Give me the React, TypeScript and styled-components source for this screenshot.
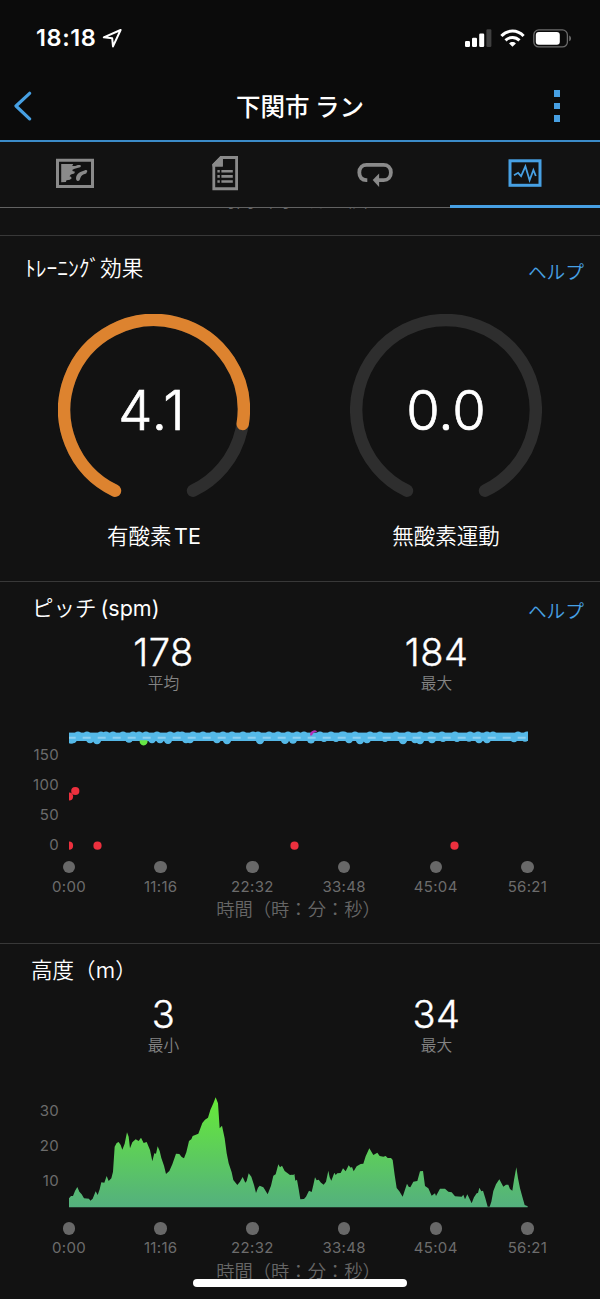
import React from 'react';
import styled, { createGlobalStyle } from 'styled-components';

const BLUE = '#47a0e3';
const GREY = '#8a8a8a';
const LATIN = `Inter, 'Noto Sans CJK JP', sans-serif`;
const JAPANESE = `'Noto Sans CJK JP', sans-serif`;

const GlobalStyle = createGlobalStyle`
  *, *::before, *::after { box-sizing: border-box; }
  body { margin: 0; background: #121212; }
  svg { display: block; }
`;

const Screen = styled.div`
  position: relative;
  display: flex;
  flex-direction: column;
  width: 600px;
  height: 1299px;
  overflow: hidden;
  background: #121212;
  color: #fff;
  font-family: ${LATIN};
`;

const StatusBar = styled.div`
  display: flex;
  justify-content: space-between;
  align-items: center;
  height: 76px;
  padding: 0 28px 0 36px;
  background: #0b0b0b;
`;

const StatusGroup = styled.div<{ $gap: number }>`
  display: flex;
  align-items: center;
  gap: ${(p) => p.$gap}px;
`;

const Clock = styled.span`
  font-size: 23.5px;
  font-weight: 600;
  line-height: 28px;
  letter-spacing: 0.6px;
`;

const Header = styled.header`
  display: flex;
  justify-content: space-between;
  align-items: center;
  height: 66px;
  padding: 0 40px 4px 13px;
  background: #0b0b0b;
  border-bottom: 2px solid #3b8bc8;
`;

const Title = styled.h1`
  margin: 0 0 1px 13px;
  font: 500 24.5px/36px ${JAPANESE};
`;

const MenuDots = styled.div`
  display: flex;
  flex-direction: column;
  gap: 6px;
`;

const MenuDot = styled.span`
  width: 6px;
  height: 6.5px;
  background: ${BLUE};
`;

const TabBar = styled.nav`
  display: flex;
  height: 66px;
`;

const Tab = styled.div<{ $active?: boolean }>`
  flex: 1;
  display: flex;
  justify-content: center;
  height: 66px;
  color: ${(p) => (p.$active ? BLUE : GREY)};
  border-bottom: ${(p) => (p.$active ? `3px solid ${BLUE}` : '1px solid #626262')};
`;

const ScrolledRow = styled.div`
  display: flex;
  align-items: flex-end;
  justify-content: center;
  height: 27px;
  padding-bottom: 22.5px;
  overflow: hidden;
`;

const Section = styled.section<{ $height: number }>`
  display: flex;
  flex-direction: column;
  flex: none;
  height: ${(p) => p.$height}px;
  border-top: 1px solid #383838;
`;

const SectionHead = styled.div<{ $left: number }>`
  display: flex;
  justify-content: space-between;
  height: 52px;
  padding: 0 16px 0 ${(p) => p.$left}px;
`;

const SectionTitle = styled.h2<{ $top: number }>`
  margin: ${(p) => p.$top}px 0 0;
  font: 350 21.5px/32px ${JAPANESE};
  white-space: pre;
`;

const Latin = styled.span<{ $gap?: number }>`
  margin-left: ${(p) => p.$gap ?? 0}px;
  font-family: ${LATIN};
  font-weight: 370;
`;

const HelpLink = styled.a<{ $top: number }>`
  margin-top: ${(p) => p.$top}px;
  font: 350 18.7px/28px ${JAPANESE};
  color: ${BLUE};
`;

const Gauges = styled.div`
  display: flex;
  justify-content: space-between;
  padding: 26px 58px 0;
`;

const GaugeColumn = styled.div`
  display: flex;
  flex-direction: column;
  align-items: center;
  width: 192px;
`;

const Dial = styled.div`
  display: grid;
  width: 192px;
  height: 192px;
  > * { grid-area: 1 / 1; }
`;

const DialValue = styled.span<{ $shift: number; $spacing: number }>`
  align-self: center;
  text-align: center;
  padding: 0 ${(p) => p.$shift}px 1px 0;
  font-size: 54.3px;
  font-weight: 300;
  -webkit-text-stroke: 0.7px currentColor;
  letter-spacing: ${(p) => p.$spacing}px;
  line-height: 64px;
`;

const DialLabel = styled.span`
  margin-top: 13px;
  font: 350 21.5px/32px ${JAPANESE};
  white-space: nowrap;
`;

const Stats = styled.div`
  display: flex;
  justify-content: space-between;
  height: 60px;
  padding: 0 63.5px;
`;

const Stat = styled.div`
  display: flex;
  flex-direction: column;
  align-items: center;
  width: 200px;
`;

const StatValue = styled.span`
  font-size: 38px;
  font-weight: 300;
  -webkit-text-stroke: 0.4px currentColor;
  line-height: 36px;
  letter-spacing: 0.5px;
`;

const StatLabel = styled.span`
  margin-top: 1px;
  font: 350 15.7px/24px ${JAPANESE};
  color: #848484;
`;

const Plot = styled.div<{ $top: number }>`
  display: flex;
  align-items: flex-start;
  margin-top: ${(p) => p.$top}px;
`;

const Scale = styled.div<{ $top: number; $step: number }>`
  display: flex;
  flex-direction: column;
  width: 69px;
  padding: ${(p) => p.$top}px 10px 0 0;
  text-align: right;
  > span {
    height: ${(p) => p.$step}px;
    font-size: 15px;
    line-height: 18px;
    letter-spacing: 0.3px;
    color: #6c6c6c;
  }
  > span:last-child { height: 18px; }
`;

const Ticks = styled.div<{ $top: number }>`
  display: flex;
  justify-content: space-between;
  margin-top: ${(p) => p.$top}px;
  padding: 0 32.5px 0 29px;
`;

const Tick = styled.div`
  display: flex;
  flex-direction: column;
  align-items: center;
  width: 80px;
  gap: 4.5px;
  font-size: 15px;
  line-height: 18px;
  letter-spacing: 0.3px;
  color: #6c6c6c;
  &::before {
    content: '';
    width: 12.5px;
    height: 12.5px;
    border-radius: 50%;
    background: #686868;
  }
`;

const AxisTitle = styled.div`
  width: 597px;
  margin-top: -1.5px;
  font: 350 18.3px/28px ${JAPANESE};
  text-align: center;
  white-space: nowrap;
  color: #666;
`;

const HomeIndicator = styled.div`
  position: absolute;
  left: 193px;
  bottom: 12px;
  width: 214px;
  height: 8px;
  border-radius: 4px;
  background: #fff;
`;

const times = ['0:00', '11:16', '22:32', '33:48', '45:04', '56:21'];
const axisLabel = '時間（時：分：秒）';

function TimeAxis({ top }: { top: number }) {
  return (
    <>
      <Ticks $top={top}>
        {times.map((t) => (
          <Tick key={t}>{t}</Tick>
        ))}
      </Ticks>
      <AxisTitle>{axisLabel}</AxisTitle>
    </>
  );
}

interface GaugeProps {
  value: string;
  shift?: number;
  spacing?: number;
  arc?: string;
  children: React.ReactNode;
}

function Gauge({ value, shift = 0, spacing = 0, arc, children }: GaugeProps) {
  return (
    <GaugeColumn>
      <Dial>
        <svg width="192" height="192" fill="none" strokeWidth="12.4" strokeLinecap="round">
          <path d="M57 176.7A89.8 89.8 0 1 1 135 176.7" stroke="#2e2e2e" />
          {arc && <path d={arc} stroke="#dd832f" />}
        </svg>
        <DialValue $shift={shift} $spacing={spacing}>{value}</DialValue>
      </Dial>
      <DialLabel>{children}</DialLabel>
    </GaugeColumn>
  );
}

/* Cadence samples: horizontal position and vertical centre inside the 459x130 plot. */
const low: [number, number][] = [
  [2, 14.5], [4, 14], [21, 14], [28, 15], [60, 13.5], [75, 13.2], [83, 14], [91, 14], [99, 14.7], [117, 14], [121, 14],
  [148, 14], [158, 15], [191, 15], [216, 14.7], [224, 14.5], [242, 14.2], [255, 12.7], [267, 12.7], [280, 14], [291, 15],
  [298, 14], [316, 12.7], [334, 15], [346, 14], [351, 15], [363, 14], [374, 12.7], [388, 12.7], [400, 12.5], [410, 14],
  [418, 14], [445, 13], [456, 12.5],
];
const high: number[] = [
  9, 18, 32, 37, 44, 54, 64, 70, 77, 88, 101, 109, 113, 124, 134, 144, 154, 163, 174, 184, 189, 200, 209, 219, 228, 235,
  251, 262, 273, 275, 286, 301, 311, 327, 339, 351, 362, 373, 386, 401, 409, 418, 424, 449, 458,
];
const paused: [number, number][] = [[0, 71.5], [6.3, 66], [0, 120.7], [28.5, 120.7], [225.5, 120.7], [385.5, 120.7]];

function CadencePlot() {
  return (
    <svg width="459" height="130" viewBox="0 0 459 130">
      <g fill="#55b9e8">
        <rect y="7.6" width="459" height="8.4" />
        {low.map(([x, y]) => (
          <circle key={`l${x}`} cx={x} cy={y} r="4.2" />
        ))}
        {high.map((x) => (
          <circle key={`h${x}`} cx={x} cy="10.6" r="4.2" />
        ))}
      </g>
      <path d="M241.2 10.5A4.2 4.2 0 0 1 248.4 6.8Q244 7 243 10.5Z" fill="#b32fb5" />
      <path d="M70.8 15.2H78.4A4 4 0 1 1 70.8 15.2Z" fill="#67e645" />
      <path d="M0 12.7H459" stroke="#8ed0f0" strokeWidth="1.9" strokeDasharray="8 7" strokeDashoffset="1.3" />
      {paused.map(([x, y]) => (
        <circle key={`${x}-${y}`} cx={x} cy={y} r="4.1" fill="#ed303e" />
      ))}
    </svg>
  );
}

const elevation =
  '0,310 6,303 12,303 18,288 25,276 31,290 38,298 45,310 60,311 64,317 71,311 80,289 86,300 92,283 97,262 106,263 113,243 119,258 127,250 132,230 137,155 143,144 149,141 155,150 160,164 167,146 174,112 179,125 183,160 190,142 200,133 209,138 216,128 224,144 233,141 243,165 250,199 256,175 261,176 266,154 272,168 277,189 285,212 291,237 301,228 310,208 321,176 331,177 338,186 345,190 352,172 360,138 367,133 371,123 388,116 400,84 408,74 417,68 424,45 433,25 440,7 447,25 452,100 459,92 467,130 473,175 479,205 488,232 493,255 505,270 513,260 521,246 529,263 533,258 539,235 547,245 555,270 561,294 567,278 572,272 583,277 596,298 606,272 613,242 620,238 628,208 633,217 639,212 647,228 655,234 663,240 669,239 673,240 676,236 679,257 684,254 689,282 694,313 705,312 711,305 720,287 728,291 733,270 738,247 743,256 749,254 756,263 764,269 771,260 778,227 782,247 787,257 796,233 800,240 805,235 815,234 822,220 830,229 839,211 845,218 849,216 854,229 863,214 875,207 883,206 890,184 901,160 913,180 925,173 932,183 943,185 950,183 956,189 966,189 971,195 977,240 983,279 991,289 1001,305 1007,287 1014,266 1019,275 1024,277 1033,260 1045,258 1053,229 1062,228 1068,273 1078,280 1088,302 1098,295 1101,303 1113,281 1128,281 1138,290 1148,292 1158,304 1178,305 1183,299 1188,313 1195,298 1208,325 1215,307 1223,295 1227,294 1231,278 1237,289 1242,287 1249,310 1256,335 1262,335 1267,320 1273,288 1281,268 1291,253 1303,275 1311,269 1318,269 1323,282 1330,287 1335,255 1342,217 1347,250 1353,280 1360,305 1367,330 1376,334';

function ElevationPlot() {
  return (
    <svg width="459" height="113" viewBox="0 0 1377 339">
      <defs>
        <linearGradient id="elevation" gradientUnits="userSpaceOnUse" x1="0" y1="7" x2="0" y2="336">
          <stop offset="0" stopColor="#66ea38" />
          <stop offset="1" stopColor="#54b07e" />
        </linearGradient>
      </defs>
      <polygon points={`0,337 ${elevation} 1376,337`} fill="url(#elevation)" />
    </svg>
  );
}

function MapIcon() {
  return (
    <svg width="38" height="64" viewBox="0 0 38 64" fill="currentColor">
      <path fillRule="evenodd" d="M0 16.7h38v29.3H0zM3 19.7v23.3h32v-23.3z" />
      <path d="M5.2 22h12l-1 1.9h3l2.7-.8h2.2c1.1.3 1.1 1.8 0 2.2l-5.4 1.5-2.2 1v1.2l2.5.8-.8 1.6-3.3 1.2-1.4 1.6 1.4.5.8 1.5-1.8 1.6-3.4.5-.6 1.7-4.7.2z" />
      <path d="M20.2 37.5c-.8-3.5 1.8-6.7 4.8-7.8l4-1.4c1.8-.6 2.6.4 2.2 1.2l-1 1.9-2.9 1.1c-1.6.8-2.8 2.5-3.4 4.8-.5 2.3-3.1 2.1-3.7.2z" />
    </svg>
  );
}

function ReportIcon() {
  return (
    <svg width="26" height="64" viewBox="0 0 26 64" fill="currentColor">
      <path fillRule="evenodd" d="M8.5 14H26v34.3H.4V22.2zM10.8 17v7.6H3.2v20.7h20V17z" />
      <path d="M8.5 14 .4 22.2v2.4h10.4V14z" />
      <path d="M5.4 28h2.4v2.6H5.4zM9.4 28h11.4v2.6H9.4zM5.4 33.1h2.4v2.6H5.4zM9.4 33.1h11.4v2.6H9.4zM5.4 38.2h2.4v2.6H5.4zM9.4 38.2h11.4v2.6H9.4z" />
    </svg>
  );
}

function LapsIcon() {
  return (
    <svg width="36" height="64" viewBox="0 0 36 64" fill="none">
      <path d="M10.3 38.1H9.4C5 38.1 2.3 35.3 2.3 30.4S5.5 22.9 9.6 22.9H26.5c4.2 0 7.4 2.7 7.4 7.5s-2.9 7.7-7.2 7.7h-6.2" stroke="currentColor" strokeWidth="3.8" />
      <path d="M15.7 38.1 22.1 31.5v13.4z" fill="currentColor" />
    </svg>
  );
}

function ChartsIcon() {
  return (
    <svg width="34" height="64" viewBox="0 0 34 64" fill="none" stroke="currentColor">
      <rect x="2" y="18.8" width="30" height="24.5" strokeWidth="3" />
      <path d="M6 33.3 10.1 30.8 13.1 34.2 17.4 24.3 21.6 38.2 25.4 28 27.8 34" strokeWidth="1.8" />
    </svg>
  );
}

export default function App() {
  return (
    <Screen>
      <GlobalStyle />
      <StatusBar>
        <StatusGroup $gap={6}>
          <Clock>18:18</Clock>
          <svg width="20" height="20" viewBox="0 0 20 20" fill="none" stroke="#fff" strokeWidth="2" strokeLinejoin="round">
            <path d="M18.6 2 1.8 9.3 10.2 10.3 11 18.4z" />
          </svg>
        </StatusGroup>
        <StatusGroup $gap={8}>
          <svg width="27" height="18" viewBox="0 0 27 18" fill="#fff">
            <rect x="0" y="12" width="5" height="6" rx="1.2" />
            <rect x="7" y="8.7" width="5" height="9.3" rx="1.2" />
            <rect x="14.2" y="4.5" width="5" height="13.5" rx="1.2" />
            <rect x="21.4" y="0.3" width="5" height="17.7" rx="1.2" fill="#404040" />
          </svg>
          <svg width="25" height="18" viewBox="0 0 25 18" fill="none" stroke="#fff" strokeWidth="3">
            <path d="M1.4 7C7.5 .3 17.5 .3 23.6 7" />
            <path d="M5.5 11.4C9.5 7.4 15.5 7.4 19.5 11.4" />
            <path d="M12.5 17.8 9.1 14.4C11 12.6 14 12.6 15.9 14.4z" fill="#fff" stroke="none" />
          </svg>
          <svg width="39" height="19" viewBox="0 0 39 19">
            <rect x="0.8" y="0.9" width="33.6" height="17" rx="5" fill="none" stroke="#6c6c6c" strokeWidth="1.3" />
            <rect x="2.8" y="3" width="24" height="12.8" rx="3" fill="#fff" />
            <path d="M36.2 6.5c2.4.8 2.4 5 0 5.8z" fill="#6c6c6c" />
          </svg>
        </StatusGroup>
      </StatusBar>
      <Header>
        <svg width="20" height="30" viewBox="0 0 20 30" fill="none" stroke={BLUE} strokeWidth="3.2" strokeLinecap="round" strokeLinejoin="round">
          <path d="M16.6 2.3 3 15 16.6 27.9" />
        </svg>
        <Title>下関市 ラン</Title>
        <MenuDots>
          <MenuDot />
          <MenuDot />
          <MenuDot />
        </MenuDots>
      </Header>
      <TabBar>
        <Tab><MapIcon /></Tab>
        <Tab><ReportIcon /></Tab>
        <Tab><LapsIcon /></Tab>
        <Tab $active><ChartsIcon /></Tab>
      </TabBar>
      <ScrolledRow>
        <AxisTitle>{axisLabel}</AxisTitle>
      </ScrolledRow>

      <Section $height={346}>
        <SectionHead $left={25}>
          <SectionTitle $top={14.5}>ﾄﾚｰﾆﾝｸﾞ効果</SectionTitle>
          <HelpLink $top={21}>ヘルプ</HelpLink>
        </SectionHead>
        <Gauges>
          <Gauge value="4.1" shift={4} spacing={1} arc="M57 176.7A89.8 89.8 0 1 1 184.7 110">
            有酸素<Latin $gap={2.5}>TE</Latin>
          </Gauge>
          <Gauge value="0.0">無酸素運動</Gauge>
        </Gauges>
      </Section>

      <Section $height={362}>
        <SectionHead $left={32}>
          <SectionTitle $top={9}>ピッチ<Latin $gap={4}>(spm)</Latin></SectionTitle>
          <HelpLink $top={14}>ヘルプ</HelpLink>
        </SectionHead>
        <Stats>
          <Stat><StatValue>178</StatValue><StatLabel>平均</StatLabel></Stat>
          <Stat><StatValue>184</StatValue><StatLabel>最大</StatLabel></Stat>
        </Stats>
        <Plot $top={31}>
          <Scale $top={20.5} $step={30.3}>
            <span>150</span>
            <span>100</span>
            <span>50</span>
            <span>0</span>
          </Scale>
          <CadencePlot />
        </Plot>
        <TimeAxis top={5.5} />
      </Section>

      <Section $height={356}>
        <SectionHead $left={31}>
          <SectionTitle $top={8.5}>高度（m）</SectionTitle>
        </SectionHead>
        <Stats>
          <Stat><StatValue>3</StatValue><StatLabel>最小</StatLabel></Stat>
          <Stat><StatValue>34</StatValue><StatLabel>最大</StatLabel></Stat>
        </Stats>
        <Plot $top={39}>
          <Scale $top={7.2} $step={35}>
            <span>30</span>
            <span>20</span>
            <span>10</span>
          </Scale>
          <ElevationPlot />
        </Plot>
        <TimeAxis top={14} />
      </Section>
      <HomeIndicator />
    </Screen>
  );
}
